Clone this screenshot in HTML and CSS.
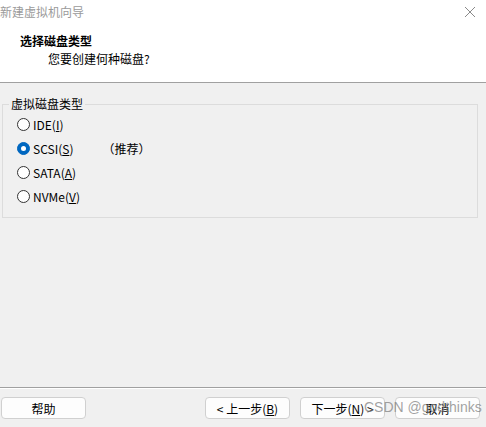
FILE: index.html
```html
<!DOCTYPE html>
<html lang="zh-CN">
<head>
    <meta charset="UTF-8">
    <title>新建虚拟机向导</title>
    <link rel="stylesheet" href="styles.css">
</head>
<body>
    <div class="wizard">
        <div class="header">
            <div class="titlebar">
                <span class="title">新建虚拟机向导</span>
                <svg class="close" width="12" height="12" viewBox="0 0 12 12">
                    <path d="M1 1 L11 11 M11 1 L1 11" stroke="#8a8a8a" stroke-width="1" fill="none"/>
                </svg>
            </div>
            <div class="heading">选择磁盘类型</div>
            <div class="subheading">您要创建何种磁盘?</div>
        </div>

        <div class="content">
            <fieldset class="group">
                <legend>虚拟磁盘类型</legend>
                <div class="option"><span class="radio"></span>IDE(<u>I</u>)</div>
                <div class="option"><span class="radio checked"></span>SCSI(<u>S</u>)<span class="hint">（推荐）</span></div>
                <div class="option"><span class="radio"></span>SATA(<u>A</u>)</div>
                <div class="option"><span class="radio"></span>NVMe(<u>V</u>)</div>
            </fieldset>
        </div>

        <div class="footer">
            <button class="btn help">帮助</button>
            <div class="nav">
                <button class="btn">&lt; 上一步(<u>B</u>)</button>
                <button class="btn">下一步(<u>N</u>) &gt;</button>
                <button class="btn">取消</button>
            </div>
            <span class="watermark">CSDN @godthinks</span>
        </div>
    </div>
</body>
</html>
```

FILE: styles.css
```css
body {
    margin: 0;
    font-family: "Noto Sans CJK SC", "Noto Sans", sans-serif;
    font-size: 12px;
    color: #000;
    background-color: #f0f0f0;
}
.wizard {
    width: 486px;
    height: 427px;
    display: flex;
    flex-direction: column;
    background-color: #f0f0f0;
}
.header {
    background-color: #fff;
    height: 82px;
    border-bottom: 1px solid #a0a0a0;
    box-sizing: content-box;
}
.titlebar {
    display: flex;
    justify-content: space-between;
    align-items: center;
    height: 24px;
    padding-right: 10px;
}
.title {
    color: #9a9a9a;
    line-height: 24px;
}
.heading {
    font-weight: bold;
    padding-left: 20px;
    margin-top: 8px;
    line-height: 18px;
}
.subheading {
    padding-left: 48px;
    line-height: 18px;
}
.content {
    flex: 1;
    padding: 13px 8px 0 2px;
}
.group {
    margin: 0;
    padding: 0 14px 9px 14px;
    border: 1px solid #dcdcdc;
    width: 476px;
    box-sizing: border-box;
}
.group legend {
    padding: 0 2px;
    margin-left: -8px;
    line-height: 16px;
}
.option {
    display: flex;
    align-items: center;
    height: 24px;
}
.radio {
    width: 11px;
    height: 11px;
    border: 1px solid #333;
    border-radius: 50%;
    background-color: #fff;
    margin-right: 3px;
    position: relative;
}
.radio.checked {
    background-color: #0067c0;
    border-color: #0067c0;
}
.radio.checked::after {
    content: "";
    position: absolute;
    left: 3px;
    top: 3px;
    width: 5px;
    height: 5px;
    border-radius: 50%;
    background-color: #fff;
}
.hint {
    margin-left: 29px;
}
.footer {
    position: relative;
    border-top: 1px solid #a0a0a0;
    display: flex;
    justify-content: space-between;
    align-items: flex-start;
    padding: 9px 6px 8px 1px;
    height: 22px;
    box-shadow: inset 0 1px 0 #fff;
}
.nav {
    display: flex;
    gap: 10px;
}
.btn {
    width: 85px;
    height: 22px;
    padding: 0;
    background-color: #fdfdfd;
    border: 1px solid #d0d0d0;
    border-radius: 4px;
    font-family: inherit;
    font-size: 12px;
    color: #000;
}
.watermark {
    position: absolute;
    left: 364px;
    top: 11px;
    font-family: "Liberation Sans", Arial, sans-serif;
    font-size: 14px;
    color: rgba(130, 130, 130, 0.75);
    pointer-events: none;
}
```
